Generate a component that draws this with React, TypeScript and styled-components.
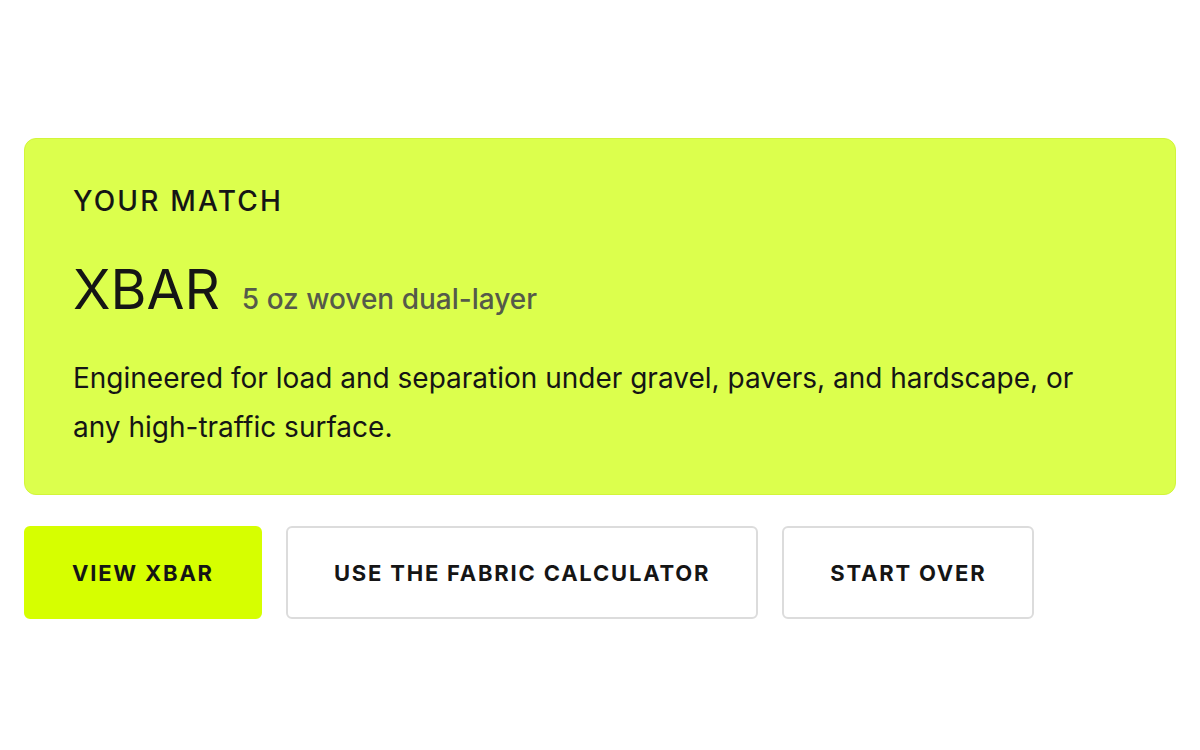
import React from "react";
import styled, { createGlobalStyle } from "styled-components";

const GlobalStyle = createGlobalStyle`
  * { box-sizing: border-box; }
  html, body {
    margin: 0;
    padding: 0;
    background: #ffffff;
    font-family: "Inter", "Noto Sans", sans-serif;
    color: #151515;
  }
`;

const Page = styled.div`
  padding: 138px 24px 0;
  display: flex;
  flex-direction: column;
  gap: 31px;
`;

const MatchCard = styled.section`
  background: #dcff4d;
  border: 1px solid #d2f53a;
  border-radius: 12px;
  padding: 42px 48px 44px;
  height: 357px;
`;

const Eyebrow = styled.h3`
  margin: 0;
  font-size: 28px;
  font-weight: 500;
  letter-spacing: 2.2px;
  line-height: 40px;
`;

const TitleRow = styled.div`
  display: flex;
  align-items: baseline;
  gap: 22px;
  margin-top: 36px;
`;

const ProductName = styled.h2`
  margin: 0;
  font-size: 55px;
  font-weight: 400;
  line-height: 64px;
`;

const Spec = styled.span`
  font-size: 28px;
  font-weight: 500;
  color: #555a4a;
`;

const Description = styled.p`
  margin: 33px 0 0;
  font-size: 28px;
  line-height: 49px;
  font-weight: 400;
  max-width: 1020px;
`;

const Actions = styled.div`
  display: flex;
  gap: 24px;
`;

const Button = styled.button<{ $primary?: boolean }>`
  height: 93px;
  padding: 0 46px;
  font-family: inherit;
  font-size: 22px;
  font-weight: 700;
  letter-spacing: 1.8px;
  color: #151515;
  border-radius: 6px;
  cursor: pointer;
  background: ${(p) => (p.$primary ? "#d6ff00" : "#ffffff")};
  border: 2px solid ${(p) => (p.$primary ? "#d6ff00" : "#dcdcdc")};
`;

export default function App() {
  return (
    <>
      <GlobalStyle />
      <Page>
        <MatchCard>
          <Eyebrow>YOUR MATCH</Eyebrow>
          <TitleRow>
            <ProductName>XBAR</ProductName>
            <Spec>5 oz woven dual-layer</Spec>
          </TitleRow>
          <Description>
            Engineered for load and separation under gravel, pavers, and
            hardscape, or any high-traffic surface.
          </Description>
        </MatchCard>
        <Actions>
          <Button $primary>VIEW XBAR</Button>
          <Button>USE THE FABRIC CALCULATOR</Button>
          <Button>START OVER</Button>
        </Actions>
      </Page>
    </>
  );
}
